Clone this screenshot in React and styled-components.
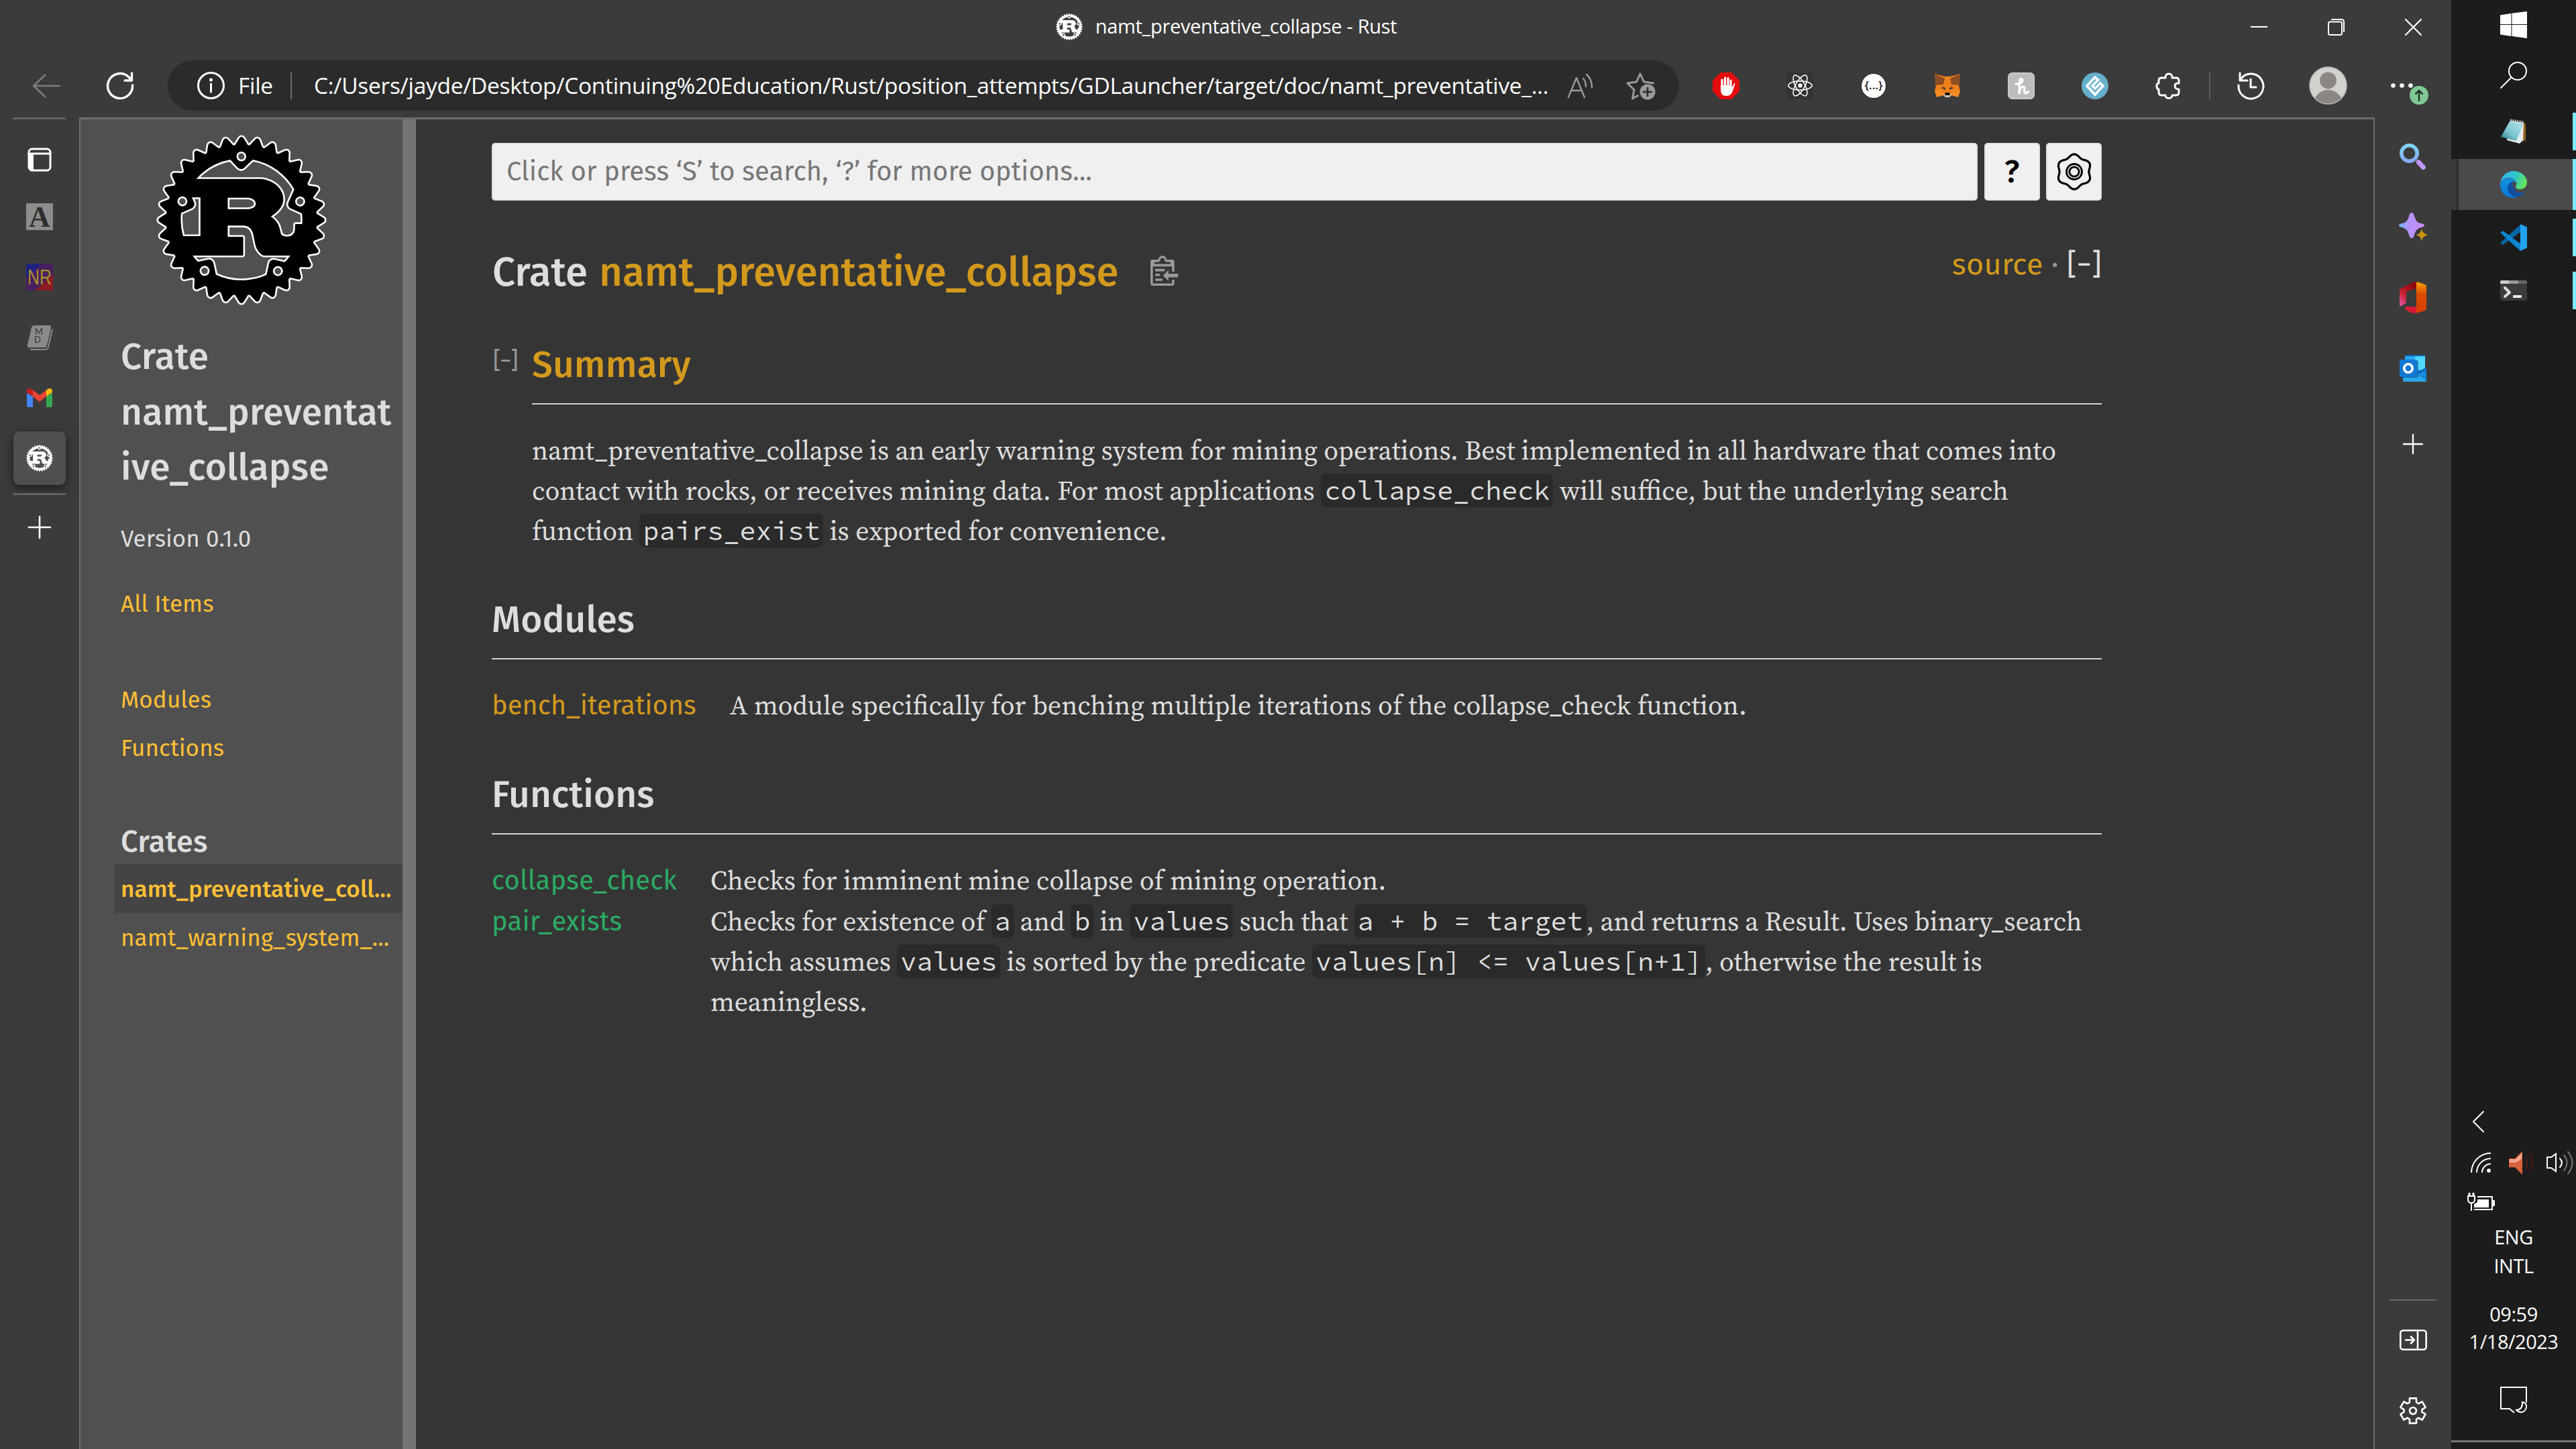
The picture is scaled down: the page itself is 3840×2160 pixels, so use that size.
import React from "react";
import styled, { createGlobalStyle, css } from "styled-components";
import { SiRust } from "react-icons/si";
import { FaReact, FaHandPaper } from "react-icons/fa";

const color = {
  chrome: "#3b3b3b",
  line: "#6b6b6b",
  page: "#353535",
  sidebar: "#505050",
  text: "#dddddd",
  orange: "#d2991d",
  yellow: "#fdbf35",
  green: "#2bab63",
  code: "#2a2a2a",
};

const font = {
  ui: `"Segoe UI", "Open Sans", "Noto Sans", sans-serif`,
  sans: `"Fira Sans", "Noto Sans", "Open Sans", sans-serif`,
  serif: `"Source Serif 4", "Noto Serif", "Liberation Serif", serif`,
  mono: `"Source Code Pro", "Liberation Mono", monospace`,
};

const GlobalStyle = createGlobalStyle`
  * { box-sizing: border-box; }
  body { margin: 0; background: ${color.chrome}; overflow: hidden; }
  svg { display: block; flex: none; overflow: visible; }
`;

const Desktop = styled.div`
  display: flex;
  width: 3840px;
  height: 2160px;
  overflow: hidden;
`;

/* ---------- browser window ---------- */

const Browser = styled.div`
  display: flex;
  flex-direction: column;
  width: 3654px;
  background: ${color.chrome};
  color: #fff;
  font-family: ${font.ui};
`;

const TitleBar = styled.header`
  display: grid;
  grid-template-columns: 345px 1fr 345px;
  height: 80px;
`;

const PageTitle = styled.div`
  grid-column: 2;
  display: flex;
  justify-content: center;
  align-items: center;
  gap: 19px;
  padding-left: 2px;
  font-size: 29px;
  letter-spacing: -0.32px;
  line-height: 78px;
`;

const TitleText = styled.span`
  padding-bottom: 2px;
`;

const WindowControls = styled.div`
  display: grid;
  grid-template-columns: repeat(3, 115px);
  align-items: center;
  justify-items: center;
  padding-left: 1px;
`;

const Toolbar = styled.div`
  display: flex;
  align-items: center;
  height: 95px;
  padding-left: 14px;
`;

const ToolSlot = styled.div`
  position: relative;
  display: flex;
  justify-content: center;
  align-items: center;
  width: 110px;
  height: 95px;
`;

const AddressBar = styled.div`
  display: flex;
  align-items: center;
  width: 2253px;
  height: 75px;
  margin: 0 15px 0 16px;
  padding: 0 35px 0 44px;
  border-radius: 38px;
  background: #2b2b2b;
  font-size: 33.5px;
  letter-spacing: -0.31px;
  white-space: nowrap;
`;

const Scheme = styled.span`
  width: 98px;
  padding: 0 0 1px 20px;
`;

const Url = styled.span`
  flex: 1;
  padding: 0 0 1px 33px;
`;

const VRule = styled.i`
  width: 2px;
  height: 40px;
  background: ${(p) => p.$color || "#6d6d6d"};
`;

const StarSlot = styled.div`
  margin-left: 48px;
`;

const ExtensionRow = styled.div`
  display: flex;
  margin-right: 5px;
`;

const HistorySlot = styled(ToolSlot)`
  margin-left: 5px;
`;

const AvatarSlot = styled(ToolSlot)`
  margin-left: 5px;
`;

const UpdateBadge = styled.div`
  position: absolute;
  left: 67px;
  top: 48px;
  display: grid;
  place-items: center;
  width: 28px;
  height: 28px;
  border-radius: 50%;
  background: #7fca94;
`;

const ReactTile = styled.div`
  display: grid;
  place-items: center;
  width: 40px;
  height: 40px;
  border-radius: 3px;
  background: #333;
`;

const Body = styled.div`
  display: flex;
  flex: 1;
`;

/* ---------- vertical tab strip ---------- */

const TabStrip = styled.nav`
  display: flex;
  flex-direction: column;
  align-items: center;
  width: 118px;
  padding-right: 1px;
`;

const StripRule = styled.hr`
  width: 79px;
  height: 3px;
  margin: ${(p) => p.$margin || "0"};
  border: 0;
  background: #636363;
`;

const TabSlot = styled.div`
  display: grid;
  place-items: center;
  width: 100%;
  height: ${(p) => p.$height || 90}px;
`;

const ActiveTab = styled.div`
  display: grid;
  place-items: center;
  width: 78px;
  height: 80px;
  border-radius: 9px;
  background: #4f4f4f;
  box-shadow: 0 4px 14px rgba(0, 0, 0, 0.55);
`;

/* ---------- document viewport ---------- */

const Viewport = styled.div`
  display: flex;
  width: 3422px;
  border: solid ${color.line};
  border-width: 3px 2px 0 2px;
  background: ${color.page};
  color: ${color.text};
  font-family: ${font.sans};
`;

const DocSidebar = styled.aside`
  width: 480px;
  padding-left: 50px;
  background: ${color.sidebar};
  white-space: nowrap;
`;

const Resizer = styled.div`
  width: 20px;
  background: #747474;
`;

const Logo = styled.div`
  display: grid;
  place-items: center;
  width: 380px;
  height: 253px;
  margin-top: 23px;

  path {
    stroke: #fff;
    stroke-width: 0.5;
    stroke-linejoin: round;
    paint-order: stroke;
  }
`;

const CrateHeading = styled.h2`
  width: 427px;
  margin: 37px 0 39px;
  padding-left: 10px;
  font-size: 55px;
  font-weight: 500;
  line-height: 82.5px;
  letter-spacing: 0.2px;
  white-space: normal;
  word-break: break-all;
`;

const Version = styled.div`
  margin-bottom: 36px;
  padding-left: 10px;
  font-size: 35px;
  line-height: 50px;
`;

const SideLink = styled.a`
  display: block;
  height: ${(p) => (p.$tall ? 73 : 72)}px;
  padding-left: 10px;
  color: ${color.yellow};
  font-size: 35px;
  letter-spacing: 0.1px;
  line-height: ${(p) => (p.$tall ? 74 : 72)}px;
  ${(p) =>
    p.$active &&
    css`
      background: #444;
      font-weight: 500;
    `}
`;

const SideBlock = styled.div`
  margin-top: ${(p) => p.$top || 0}px;
`;

const CratesHeading = styled.h3`
  margin: 76px 0 5px;
  padding-left: 10px;
  font-size: 45px;
  font-weight: 500;
  line-height: 56px;
  letter-spacing: 0.3px;
`;

const Main = styled.main`
  width: 2513px;
  padding: 35px 0 0 113px;
`;

const SearchRow = styled.div`
  display: grid;
  grid-template-columns: 2215px 83px 83px;
  column-gap: 9.5px;
  height: 85px;
`;

const boxed = css`
  border: 2px solid #e0e0e0;
  border-radius: 5px;
  background: #f0f0f0;
`;

const SearchField = styled.div`
  ${boxed}
  padding-left: 20px;
  color: #777;
  font-size: 40px;
  line-height: 82px;
  letter-spacing: 0.06px;
`;

const SquareButton = styled.button`
  ${boxed}
  display: grid;
  place-items: center;
  padding: 0;
  color: #000;
  font: 500 48px/81px ${font.sans};
`;

const HeadingRow = styled.div`
  display: flex;
  align-items: flex-start;
  height: 80px;
  margin-top: 66px;
  white-space: nowrap;
`;

const CrateTitle = styled.h1`
  flex: 1;
  display: flex;
  align-items: flex-start;
  margin: 0;
  padding: 5px 0 0 1px;
  font-size: 60px;
  font-weight: 500;
  line-height: 75px;

  svg {
    margin: 12px 0 0 47px;
  }
`;

const CrateName = styled.a`
  margin-left: 17px;
  color: ${color.orange};
  letter-spacing: 0.04px;
`;

const OutOfBand = styled.div`
  font-size: 45px;
  line-height: 60px;
  color: #999;
  letter-spacing: 0.2px;
`;

const SourceLink = styled.a`
  color: ${color.orange};
`;

const ToggleAll = styled.span`
  color: ${color.text};
`;

const Summary = styled.section`
  display: grid;
  grid-template-columns: 60px 1fr;
  margin-top: 65px;
`;

const Toggle = styled.span`
  margin: 8px 0 0 2px;
  color: #999;
  font-size: 35px;
  line-height: 40px;
  letter-spacing: -1.3px;
`;

const SectionTitle = styled.h2`
  height: 94px;
  margin: ${(p) => p.$top || 0}px 0 38px;
  border-bottom: 2px solid #d2d2d2;
  color: ${(p) => (p.$link ? color.orange : color.text)};
  font-size: 55px;
  font-weight: 500;
  line-height: 70px;
  letter-spacing: 0.15px;
`;

const Prose = styled.p`
  margin: 0;
  font-family: ${font.serif};
  font-size: 39.8px;
  line-height: 60px;
  white-space: nowrap;
`;

const Line = styled.span`
  display: block;
  word-spacing: ${(p) => p.$space || 0}px;
`;

const Code = styled.code`
  padding: 0 5px;
  border-radius: 8px;
  background: ${color.code};
  font-family: ${font.mono};
  font-size: 40px;
  line-height: 1;
  word-spacing: 0;
`;

const ItemTable = styled.div`
  display: grid;
  grid-template-columns: ${(p) => p.$name}px 1fr;
  row-gap: 1px;
`;

const ItemName = styled.a`
  padding-top: 1px;
  color: ${(p) => (p.$fn ? color.green : color.orange)};
  font-size: 40px;
  line-height: 60px;
  letter-spacing: ${(p) => (p.$fn ? 0.15 : -0.1)}px;
  height: 60px;
`;

/* ---------- edge side bar ---------- */

const EdgeBar = styled.aside`
  display: flex;
  flex-direction: column;
  align-items: center;
  width: 114px;
  padding-top: 6px;
`;

const EdgeSlot = styled.div`
  display: grid;
  place-items: center;
  height: ${(p) => p.$height || 105}px;
`;

const EdgeFooter = styled.div`
  display: flex;
  flex-direction: column;
  align-items: center;
  margin-top: auto;
  padding-bottom: 5px;
`;

const EdgeRule = styled.hr`
  width: 70px;
  height: 2px;
  margin: 0 0 6px;
  border: 0;
  background: ${color.line};
`;

/* ---------- windows taskbar ---------- */

const Taskbar = styled.aside`
  display: flex;
  flex-direction: column;
  width: 186px;
  background: #1c1c1c;
  color: #fff;
  font-family: ${font.ui};
`;

const TaskSlot = styled.div`
  display: grid;
  place-items: center;
  height: ${(p) => p.$height || 56}px;
  margin-bottom: ${(p) => p.$gap || 0}px;
  ${(p) =>
    p.$running &&
    css`
      padding-left: 5px;
      border-right: 5px solid #7aebfd;
    `}
  ${(p) =>
    p.$active &&
    css`
      background: linear-gradient(90deg, #3b3b3b 8px, #2c2c2c 8px 11px, #4a4a4a 11px);
    `}
`;

const Tray = styled.div`
  margin-top: auto;
  display: flex;
  flex-direction: column;
`;

const TrayGrid = styled.div`
  display: grid;
  grid-template-columns: 60px 60px 49px;
  grid-template-rows: 68px 54px 62px;
  align-items: center;
  justify-items: center;
  padding-left: 14px;
`;

const Chevron = styled.div`
  grid-column: 1 / -1;
  justify-self: start;
  margin-left: 18px;
`;

const Speaker = styled.div`
  justify-self: end;
`;

const TrayText = styled.div`
  margin-top: ${(p) => p.$top}px;
  font-size: 29px;
  line-height: ${(p) => p.$line}px;
  letter-spacing: -0.5px;
  text-align: center;
`;

const Notifications = styled.div`
  display: grid;
  place-items: center;
  height: 40px;
  margin: 47px 0 40px;
`;

const TaskbarEdge = styled.div`
  height: 13px;
  border-top: 3px solid #777;
`;

/* ---------- drawings ---------- */

const line = (width = 3, stroke = "#fff") => ({
  fill: "none",
  stroke,
  strokeWidth: width,
  strokeLinecap: "round",
  strokeLinejoin: "round",
});

function polar(r, deg) {
  const a = (deg * Math.PI) / 180;
  return `${(r * Math.cos(a)).toFixed(2)} ${(r * Math.sin(a)).toFixed(2)}`;
}

const toothedPath =
  "M" +
  Array.from({ length: 6 }, (_, k) => {
    const c = k * 60 - 90;
    return [polar(13.6, c - 22), polar(19.3, c - 15), polar(19.3, c + 15), polar(13.6, c + 22)].join("L");
  }).join("L") +
  "Z";

const wavyPath =
  "M" +
  Array.from({ length: 120 }, (_, i) => {
    const deg = i * 3 - 90;
    return polar(24 + 2.1 * Math.cos((6 * (deg + 90) * Math.PI) / 180), deg);
  }).join("L") +
  "Z";

const BackArrow = () => (
  <svg width="42" height="36" {...line(2.6, "#7c7c7c")}><path d="M41 18H2M19 2 2 18l17 16" /></svg>
);
const Reload = () => (
  <svg width="42" height="42" {...line(3.4)}><path d="M39.5 20A18.5 18.5 0 1 1 33 7l5 5M38.500 2v11H28" /></svg>
);
const Info = () => (
  <svg width="41" height="41" {...line(3)}><circle cx="20.500" cy="20.500" r="19" /><path d="M20.500 18v12" /><circle cx="20.500" cy="12" r="1" fill="#fff" /></svg>
);
const ReadAloud = () => (
  <svg width="40" height="38" {...line(2.4, "#9a9a9a")}><path d="M2 36 14 7l12 29M6 26h16M24 8c3 3 4 8 4 12M29 2c6 5 8 12 8 19" /></svg>
);
const Star = () => (
  <svg width="44" height="42" {...line(3, "#9a9a9a")}>
    <path d="m21 3 5.500 12 14 2M21 3l-5.500 12-13.500 2 10 10-2.500 13 8-4.500" />
    <circle cx="32" cy="30" r="11.500" fill="#9a9a9a" stroke="none" />
    <path d="M32 24v12M26 30h12" stroke="#2b2b2b" strokeWidth="2.600" />
  </svg>
);
const AdBlock = () => (
  <svg width="40" height="40">
    <path d="M12 0h16l12 12v16L28 40H12L0 28V12z" fill="#e40d0d" />
    <g {...line(3.600)}><path d="M14 22V11M18.500 20V8M23 20V8.500M27 22V12" strokeWidth="3.200" /></g>
    <path d="M12 19h16.500v4l3-6q1.500-2 2-.5L30 27q-2 8-9.500 8-8.500 0-8.500-9z" fill="#fff" />
  </svg>
);
const Braces = () => (
  <svg width="38" height="38"><circle cx="19" cy="19" r="19" fill="#222" /><circle cx="19" cy="19" r="18" fill="#fff" /><text x="19" y="24" textAnchor="middle" fontFamily="Open Sans" fontWeight="600" fontSize="17" fill="#222">{"{...}"}</text></svg>
);
const Fox = () => (
  <svg width="40" height="40">
    <path d="m1 2 15 4h8l15-4-2 17 2 9-3 8-9-2-5 3h-4l-5-3-9 2-3-8 2-9z" fill="#f08019" />
    <path d="m1 2 15 7-2 9-12 1zM39 2 24 9l2 9 12 1z" fill="#8e4d24" />
    <path d="m1 27 12-1 1 8-10 3zM39 27l-12-1-1 8 10 3z" fill="#f28a22" />
    <path d="m14 20 3 6-7-2zM26 20l-3 6 7-2z" fill="#b85c20" />
    <path d="m12 22 5 1-1 3zM28 22l-5 1 1 3z" fill="#233447" />
    <path d="M13 32h14l-4 5h-6z" fill="#d8c5b8" />
    <path d="M17 30h6l1 4h-8z" fill="#111" />
  </svg>
);
const Honey = () => (
  <svg width="40" height="40"><rect x=".7" y=".7" width="38.600" height="38.600" rx="6" fill="#bdbdbd" stroke="#d2d2d2" strokeWidth="1.400" /><path d="M12 17c5 1 10-2 10-5.500 0-3-4-2.500-4.500 1.500L17 31c1-6 3-10 6-10 4 0-.5 10 3.500 10 2 0 3-1 4-2.500" {...line(3.200)} /></svg>
);
const BlueKnot = () => (
  <svg width="40" height="40"><circle cx="20" cy="20" r="20" fill="#65b0cc" /><g {...line(3.600)} strokeLinejoin="miter"><path d="M24 11 20 7 8 20l12 13 12-13-4-4-8 8-4-4 9-9" /></g></svg>
);
const Puzzle = () => (
  <svg width="38" height="40" {...line(3)}><path d="M8 8h6c-1-8 11-8 10 0h6q4 0 4 4v4c-8-1-8 9 0 9v4q0 5-4 5h-6c1 6-11 6-10 0H8q-4 0-4-5v-4c-4 0-4-9 0-9v-4q0-4 4-4z" /></svg>
);
const History = () => (
  <svg width="40" height="42" {...line(3)}><path d="M2 20a18.500 18.500 0 1 0 4-10M4 2v11h11M20 11v12h8" /></svg>
);
const Avatar = () => (
  <svg width="57" height="57">
    <defs><clipPath id="face"><circle cx="28.500" cy="28.500" r="27.500" /></clipPath></defs>
    <circle cx="28.500" cy="28.500" r="28" fill="#d3d1cd" />
    <g clipPath="url(#face)" fill="#8b8783"><circle cx="28.500" cy="21" r="12.500" /><circle cx="28.500" cy="57" r="22" /></g>
    <circle cx="28.500" cy="28.500" r="27.500" fill="none" stroke="#b5b1ad" strokeWidth="1.500" />
  </svg>
);
const Dots = () => (
  <svg width="33" height="7" fill="#fff"><circle cx="3.500" cy="3.500" r="3.300" /><circle cx="16.500" cy="3.500" r="3.300" /><circle cx="29.500" cy="3.500" r="3.300" /></svg>
);
const UpArrow = () => (
  <svg width="14" height="18" {...line(2.600, "#26372b")} strokeLinecap="butt"><path d="M7 18V2M1.500 7.500 7 2l5.500 5.500" /></svg>
);
const Minimize = () => <svg width="25" height="2"><rect width="25" height="2" fill="#fff" /></svg>;
const Restore = () => (
  <svg width="25" height="25" {...line(2)}><rect x="1" y="4.500" width="20" height="19.500" rx="2.500" /><path d="M6 1h14q4 0 4 4v14" /></svg>
);
const Close = () => <svg width="25" height="25" {...line(2.200)}><path d="m1 1 23 23M24 1 1 24" /></svg>;

const TabsIcon = () => (
  <svg width="36" height="36" {...line(3)}><rect x="2" y="2" width="32" height="32" rx="5" /><path d="M2 9h32" /><path d="M2 9h7v25H6q-4 0-4-4z" fill="#fff" stroke="none" /></svg>
);
const LetterTab = () => (
  <svg width="40" height="40"><rect width="40" height="40" fill="#8c8c8c" /><text x="20" y="35" textAnchor="middle" fontFamily="Liberation Serif" fontWeight="700" fontSize="44" fill="#2e2e2e">A</text></svg>
);
const NrTab = () => (
  <svg width="40" height="40"><rect width="40" height="40" fill="#49205f" /><path d="M0 0h24L0 22z" fill="#20237e" /><path d="M14 40 40 16v24z" fill="#8c1c22" /><text x="20" y="31" textAnchor="middle" fontFamily="Liberation Sans" fontSize="31" textLength="36" lengthAdjust="spacingAndGlyphs" fill="#a8922c">NR</text></svg>
);
const BookTab = () => (
  <svg width="40" height="38">
    <path d="M12 1h22q4 0 3 4l-6 26q-1 3-4 3H5q-4 0-3-4L8 4q1-3 4-3z" fill="#8a8a8a" />
    <path d="m39 7-6 26q-1 4-5 4H6" fill="none" stroke="#8a8a8a" strokeWidth="2" />
    <text x="19" y="15" textAnchor="middle" fontFamily="Lato" fontSize="13" fill="#333">M</text>
    <text x="17" y="27" textAnchor="middle" fontFamily="Lato" fontSize="13" fill="#333">D</text>
  </svg>
);
const Gmail = () => (
  <svg width="38" height="28">
    <path d="M0 7v18a3 3 0 0 0 3 3h6V12z" fill="#4285f4" /><path d="M38 7v18a3 3 0 0 1-3 3h-6V12z" fill="#34a853" />
    <path d="M9 12V2.500L19 10l10-7.500V12l-10 8z" fill="#ea4335" /><path d="M29 2.500V12l9-6V4c0-4-4-5-7-3z" fill="#fbbc04" /><path d="M9 2.500V12L0 6V4c0-4 4-5 7-3z" fill="#c5221f" />
  </svg>
);
const Plus = ({ size = 34 }) => (
  <svg width={size} height={size} viewBox="0 0 34 34" {...line(2.600)}><path d="M17 1v32M1 17h32" /></svg>
);

const CopyPath = () => (
  <svg width="41" height="45" viewBox="0 0 23 25" preserveAspectRatio="none" fill="#999">
    <path d="M18 20h2v3c0 1-1 2-2 2H2c-.998 0-2-1-2-2V5c0-.911.755-1.667 1.667-1.667h5A3.323 3.323 0 0110 0a3.323 3.323 0 013.333 3.333h5C19.245 3.333 20 4.090 20 5v8.333h-2V9H2v14h16v-3zM3 7h14c0-.911-.793-1.667-1.750-1.667H13.500c-.957 0-1.750-.755-1.750-1.666C11.750 2.755 10.957 2 10 2s-1.750.755-1.750 1.667c0 .911-.793 1.666-1.750 1.666H4.750C3.793 5.333 3 6.090 3 7z" />
    <path d="M4 19h6v2H4zM12 11H4v2h8zM4 17h4v-2H4zM15 15v-3l-4.500 4.500L15 21v-3l8.027-.032L23 15z" />
  </svg>
);
const Wheel = () => (
  <svg width="54" height="54" viewBox="-27 -27 54 54" {...line(3.200, "#000")}><path d={wavyPath} /><circle r="11.500" strokeWidth="2.800" /><circle r="7.200" strokeWidth="2.800" /></svg>
);

const EdgeSearch = () => (
  <svg width="40" height="40">
    <defs><linearGradient id="es" x1="0" y1="0" x2="0" y2="1"><stop stopColor="#7fd3f7" /><stop offset="1" stopColor="#86a9fb" /></linearGradient></defs>
    <circle cx="14.500" cy="14.500" r="11.700" fill="none" stroke="url(#es)" strokeWidth="5.600" />
    <path d="m24 24 4 3.500" stroke="#777" strokeWidth="4" /><path d="m28.500 28 7 7.500" stroke="#c094f8" strokeWidth="7" strokeLinecap="round" />
  </svg>
);
const Sparkles = () => (
  <svg width="43" height="43">
    <defs><linearGradient id="sp"><stop stopColor="#6fb4ff" /><stop offset=".4" stopColor="#b592fb" /><stop offset="1" stopColor="#c98df8" /></linearGradient></defs>
    <path d="M19 0q3 0 4 5 2 10 10 11 5 1 5 3t-5 3q-8 2-10 11-1 5-4 5t-4-5q-2-9-10-11-5-1-5-3t5-3q8-1 10-11 1-5 4-5z" fill="url(#sp)" />
    <path d="M34 24q1 7 9 9-8 2-9 10-1-8-8-10 7-2 8-9z" fill="#c8930f" />
  </svg>
);
const Office = () => (
  <svg width="40" height="47">
    <defs>
      <linearGradient id="of1" x1="0" y1="0" x2="0" y2="1"><stop stopColor="#f8a000" /><stop offset=".4" stopColor="#dc4a00" /><stop offset="1" stopColor="#d83c00" /></linearGradient>
      <linearGradient id="of2" x1="0" y1="1" x2=".5" y2="0"><stop stopColor="#e25bb4" /><stop offset=".5" stopColor="#c8202f" /><stop offset="1" stopColor="#8c0c10" /></linearGradient>
    </defs>
    <path d="M24 1q2-1 5 0l9 3q2 1 2 3v33q0 2-2 3l-13 4V9z" fill="url(#of1)" />
    <path d="M0 13q0-2 2-3L19 1q3-2 6 0v9L12 14q-2 1-2 3v13q0 2-2 3l-6 3q-2 1-2-1z" fill="url(#of2)" />
    <path d="M9 37h16v9q-4 2-8 0l-7-4q-3-3-1-5z" fill="#d71a35" />
  </svg>
);
const Outlook = () => (
  <svg width="40" height="40">
    <path d="M8 0h30v22H8z" fill="#50d9ff" /><path d="M8 2h15v18H8z" fill="#28a8ea" /><path d="M8 0h30v2H8z" fill="#0a64b8" />
    <path d="M5 22h35v18H7q-2 0-2-2z" fill="#28a8ea" /><path d="M40 19v20L25 27z" fill="#148bdc" /><path d="m26 26 14-7v3l-11 6z" fill="#0f5fae" />
    <rect x="2" y="8" width="26" height="26" rx="3" fill="#0c4a80" opacity=".6" />
    <rect y="7" width="26" height="26" rx="3" fill="#0f78d4" /><circle cx="13" cy="20" r="6.200" fill="none" stroke="#fff" strokeWidth="3.600" />
  </svg>
);
const PanelIcon = () => (
  <svg width="41" height="31" {...line(2.600)}><rect x="1.300" y="1.300" width="38.400" height="28.400" rx="4" /><path d="M27 1v29M9 15.500h13M17 10.500l5 5-5 5" /></svg>
);
const Gear = () => (
  <svg width="42" height="42" viewBox="-21 -21 42 42" {...line(2.600)}><path d={toothedPath} /><circle r="5" /></svg>
);

const WindowsLogo = () => (
  <svg width="40" height="40" fill="#fff"><path d="M0 5.500 16.500 3v16H0zM17.500 2.800 40 0v19H17.500zM0 20h16.500v17L0 34.500zM17.500 20H40v20l-22.500-3z" /></svg>
);
const SearchGlass = () => (
  <svg width="40" height="40" {...line(2)}><circle cx="26" cy="14" r="13" /><path d="M16.500 23.500 1 39" /></svg>
);
const Notepad = () => (
  <svg width="38" height="36">
    <defs><linearGradient id="np" x1="0" y1="1" x2="1" y2="0"><stop stopColor="#1c6a76" /><stop offset=".4" stopColor="#7bc4d0" /><stop offset="1" stopColor="#b8e4ea" /></linearGradient></defs>
    <path d="m33 4 4 3v23l-4 4z" fill="#94641f" /><path d="m14 2 20 3-1 26-5 5-19-5z" fill="#e3ebee" />
    <path d="m13 3 21 3-11 26L0 26z" fill="url(#np)" /><path d="m14 1 20 3" stroke="#c9c9c9" strokeWidth="3" strokeDasharray="2 1.500" />
  </svg>
);
const EdgeLogo = () => (
  <svg width="40" height="40" viewBox="0 0 40 40">
    <defs>
      <linearGradient id="eg1" x1="0" y1=".3" x2="1" y2=".6"><stop stopColor="#33b4ec" /><stop offset=".5" stopColor="#2fc4cf" /><stop offset="1" stopColor="#68e84f" /></linearGradient>
      <linearGradient id="eg2" x1="0" y1="0" x2="0" y2="1"><stop stopColor="#1690da" /><stop offset="1" stopColor="#0679dc" /></linearGradient>
    </defs>
    <path d="M0 19C1 8 9 0 20 0s20 8 20 16.500c0 7-5 10.500-10 10.500-5 0-7-2-7-3 0-1 1.500-2 1.500-5 0-5-5-9-11.500-9C6 10 1 14 0 19z" fill="url(#eg1)" />
    <path d="M0 20C1 14 6 10.500 13 10.500c6 0 10 3 11 7-4-3-9-1-11 3-5 9 3 18 13 18.500C11 43 0 33 0 20z" fill="url(#eg2)" />
    <path d="M19 16c-6 1-9 7-7.500 13 2 7 8 10.500 14 9.500 5-1 9-4 11.500-8-6 3-12 1.500-15-2.500-2-3-3.500-5-3.500-8 0-2 .5-3 .5-4z" fill="#114f9e" />
  </svg>
);
const VsCode = () => (
  <svg width="40" height="40">
    <path d="m0 28 4 3 26-19V1z" fill="#0468a8" /><path d="m0 13 4-3 26 19v11z" fill="#0c86cf" /><path d="m30 0 10 4.500v31L30 40z" fill="#24a4f0" />
  </svg>
);
const Terminal = () => (
  <svg width="40" height="30">
    <rect width="40" height="30" rx="2" fill="#3b3b3b" /><path d="M0 5V2q0-2 2-2h11v5z" fill="#ccc" /><path d="M13 0h14v5H13z" fill="#999" /><path d="M27 0h11q2 0 2 2v3H27z" fill="#666" />
    <path d="m7 11 7 7-7 6" {...line(4, "#ddd")} /><rect x="19" y="22" width="13" height="4" rx="1" fill="#eee" />
  </svg>
);

const ChevronIcon = () => <svg width="17" height="32" {...line(2)}><path d="M16 1 1 16l15 15" /></svg>;
const Wifi = () => (
  <svg width="30" height="30" {...line(2)} strokeLinecap="butt"><path d="M1 30A29 29 0 0 1 30 1M9 30A21 21 0 0 1 30 9M17 30a13 13 0 0 1 13-13" /><circle cx="27" cy="27" r="2.500" fill="#fff" stroke="#fff" strokeWidth="1" /></svg>
);
const RedSpeaker = () => (
  <svg width="38" height="37"><path d="M1 12h9L21 1v35L10 25H1z" fill="#d9613c" /><path d="M2 13h9L20 4v9L11 18H2z" fill="#f0a690" /><g {...line(2, "#4c1d10")}><path d="M26 10q5 8 0 17M32 5q8 13 0 27" /></g></svg>
);
const WhiteSpeaker = () => (
  <svg width="41" height="37" {...line(2)} strokeLinejoin="miter"><path d="M1 10h6l7-5v26l-7-5H1z" /><path d="M20 12q6 6 0 13" /><path d="M26 7q9 11 0 23M32 2q13 16 0 33" stroke="#777" /></svg>
);
const Battery = () => (
  <svg width="41" height="27"><path d="M15 6h22v19H10" fill="none" stroke="#fff" strokeWidth="2" /><path d="M15 10h17v12H10v-5l5-3z" fill="#fff" /><rect x="38" y="11" width="3" height="9" fill="#fff" /><path d="M3 0v5M9 0v5" stroke="#fff" strokeWidth="3" /><path d="M1 5h10v5q0 4-3 5H4q-3-1-3-5zM6 15v12" fill="none" stroke="#fff" strokeWidth="2" /></svg>
);
const Notification = () => (
  <svg width="40" height="40" {...line(2)} strokeLinecap="butt" strokeLinejoin="miter"><path d="M39 24V1H1v32h13l7 6" /><path d="M33 23q1 11-9 12 4 4 9 3 7-3 6-10-1-4-6-5z" /></svg>
);

/* ---------- page ---------- */

const ReactTools = () => (
  <ReactTile><FaReact size={37} /></ReactTile>
);

const extensions = [AdBlock, ReactTools, Braces, Fox, Honey, BlueKnot, Puzzle];

export default function App() {
  return (
    <>
      <GlobalStyle />
      <Desktop>
        <Browser>
          <TitleBar>
            <PageTitle><SiRust size={40} /><TitleText>namt_preventative_collapse - Rust</TitleText></PageTitle>
            <WindowControls><Minimize /><Restore /><Close /></WindowControls>
          </TitleBar>
          <Toolbar>
            <ToolSlot><BackArrow /></ToolSlot>
            <ToolSlot><Reload /></ToolSlot>
            <AddressBar>
              <Info />
              <Scheme>File</Scheme>
              <VRule />
              <Url>C:/Users/jayde/Desktop/Continuing%20Education/Rust/position_attempts/GDLauncher/target/doc/namt_preventative_...</Url>
              <ReadAloud />
              <StarSlot><Star /></StarSlot>
            </AddressBar>
            <ExtensionRow>
              {extensions.map((Icon, i) => (
                <ToolSlot key={i}><Icon /></ToolSlot>
              ))}
            </ExtensionRow>
            <VRule $color="#5e5e5e" />
            <HistorySlot><History /></HistorySlot>
            <AvatarSlot><Avatar /></AvatarSlot>
            <ToolSlot>
              <Dots />
              <UpdateBadge><UpArrow /></UpdateBadge>
            </ToolSlot>
          </Toolbar>

          <Body>
            <TabStrip>
              <StripRule $margin="0 0 20px" />
              <TabSlot $height={80}><TabsIcon /></TabSlot>
              <TabSlot><LetterTab /></TabSlot>
              <TabSlot><NrTab /></TabSlot>
              <TabSlot><BookTab /></TabSlot>
              <TabSlot><Gmail /></TabSlot>
              <TabSlot><ActiveTab><SiRust size={40} /></ActiveTab></TabSlot>
              <StripRule $margin="7px 0 3px" />
              <TabSlot><Plus /></TabSlot>
            </TabStrip>

            <Viewport>
              <DocSidebar>
                <Logo><SiRust size={248} color="#000" /></Logo>
                <CrateHeading>Crate<br />namt_preventative_collapse</CrateHeading>
                <Version>Version 0.1.0</Version>
                <SideLink>All Items</SideLink>
                <SideBlock $top={71}>
                  <SideLink>Modules</SideLink>
                  <SideLink>Functions</SideLink>
                </SideBlock>
                <CratesHeading>Crates</CratesHeading>
                <SideLink $tall $active>namt_preventative_coll...</SideLink>
                <SideLink $tall>namt_warning_system_...</SideLink>
              </DocSidebar>
              <Resizer />

              <Main>
                <SearchRow>
                  <SearchField>Click or press ‘S’ to search, ‘?’ for more options...</SearchField>
                  <SquareButton>?</SquareButton>
                  <SquareButton><Wheel /></SquareButton>
                </SearchRow>

                <HeadingRow>
                  <CrateTitle>
                    Crate <CrateName>namt_preventative_collapse</CrateName>
                    <CopyPath />
                  </CrateTitle>
                  <OutOfBand>
                    <SourceLink>source</SourceLink> · <ToggleAll>[−]</ToggleAll>
                  </OutOfBand>
                </HeadingRow>

                <Summary>
                  <Toggle>[−]</Toggle>
                  <div>
                    <SectionTitle $link>Summary</SectionTitle>
                    <Prose>
                      <Line $space={-0.12}>namt_preventative_collapse is an early warning system for mining operations. Best implemented in all hardware that comes into</Line>
                      <Line $space={0.3}>contact with rocks, or receives mining data. For most applications <Code>collapse_check</Code> will suffice, but the underlying search</Line>
                      <Line>function <Code>pairs_exist</Code> is exported for convenience.</Line>
                    </Prose>
                  </div>
                </Summary>

                <SectionTitle $top={68}>Modules</SectionTitle>
                <ItemTable $name={355}>
                  <ItemName>bench_iterations</ItemName>
                  <Prose>
                    <Line $space={0.2}>A module specifically for benching multiple iterations of the collapse_check function.</Line>
                  </Prose>
                </ItemTable>

                <SectionTitle $top={69}>Functions</SectionTitle>
                <ItemTable $name={326}>
                  <ItemName $fn>collapse_check</ItemName>
                  <Prose><Line $space={0.2}>Checks for imminent mine collapse of mining operation.</Line></Prose>
                  <ItemName $fn>pair_exists</ItemName>
                  <Prose>
                    <Line $space={-0.25}>Checks for existence of <Code>a</Code> and <Code>b</Code> in <Code>values</Code> such that <Code>a + b = target</Code>, and returns a Result. Uses binary_search</Line>
                    <Line>which assumes <Code>values</Code> is sorted by the predicate <Code>values[n] &lt;= values[n+1]</Code>, otherwise the result is</Line>
                    <Line>meaningless.</Line>
                  </Prose>
                </ItemTable>
              </Main>
            </Viewport>

            <EdgeBar>
              <EdgeSlot><EdgeSearch /></EdgeSlot>
              <EdgeSlot><Sparkles /></EdgeSlot>
              <EdgeSlot><Office /></EdgeSlot>
              <EdgeSlot><Outlook /></EdgeSlot>
              <EdgeSlot $height={121}><Plus size={30} /></EdgeSlot>
              <EdgeFooter>
                <EdgeRule />
                <EdgeSlot><PanelIcon /></EdgeSlot>
                <EdgeSlot><Gear /></EdgeSlot>
              </EdgeFooter>
            </EdgeBar>
          </Body>
        </Browser>

        <Taskbar>
          <TaskSlot $height={74}><WindowsLogo /></TaskSlot>
          <TaskSlot $height={76} $gap={18}><SearchGlass /></TaskSlot>
          <TaskSlot $running $gap={13}><Notepad /></TaskSlot>
          <TaskSlot $height={76} $running $active $gap={13}><EdgeLogo /></TaskSlot>
          <TaskSlot $running $gap={23}><VsCode /></TaskSlot>
          <TaskSlot $running><Terminal /></TaskSlot>
          <Tray>
            <TrayGrid>
              <Chevron><ChevronIcon /></Chevron>
              <Wifi />
              <RedSpeaker />
              <Speaker><WhiteSpeaker /></Speaker>
              <Battery />
            </TrayGrid>
            <TrayText $top={0} $line={43}>ENG<br />INTL</TrayText>
            <TrayText $top={30} $line={41}>09:59<br />1/18/2023</TrayText>
            <Notifications><Notification /></Notifications>
            <TaskbarEdge />
          </Tray>
        </Taskbar>
      </Desktop>
    </>
  );
}
